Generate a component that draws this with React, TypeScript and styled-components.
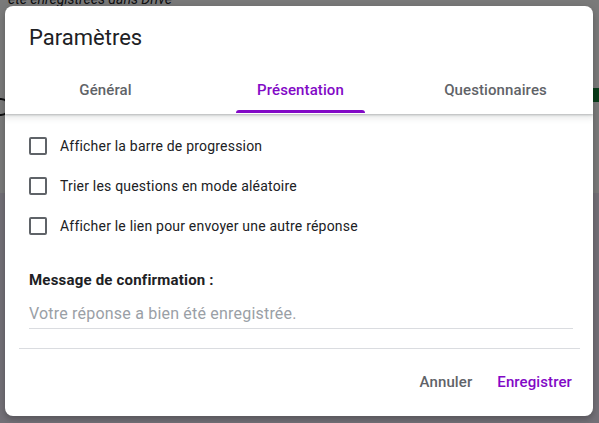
import React from "react";
import styled, { createGlobalStyle } from "styled-components";

const Global = createGlobalStyle`
  html, body { margin: 0; padding: 0; }
  body {
    width: 599px;
    height: 423px;
    overflow: hidden;
    font-family: Roboto, "Liberation Sans", Arial, sans-serif;
    background: #f0ebf8;
  }
`;

const Stage = styled.div`
  position: relative;
  width: 599px;
  height: 423px;
  overflow: hidden;
  background: #f0ebf8;
`;

const PageCard = styled.div`
  display: flex;
  flex-direction: column;
  height: 193px;
  background: #ffffff;
  padding: 0 8px;
`;

const PageNote = styled.div`
  margin-top: -9px;
  font-size: 14px;
  font-style: italic;
  color: #202124;
  line-height: 16px;
`;

const PageRow = styled.div`
  display: flex;
  justify-content: space-between;
  align-items: flex-start;
  margin-top: 81px;
  margin-left: -16px;
  margin-right: -8px;
`;

const PageCircle = styled.div`
  margin-top: 10px;
  width: 14px;
  height: 14px;
  border: 2px solid #202124;
  border-radius: 50%;
`;

const PageChip = styled.div`
  width: 8px;
  height: 14px;
  background: #188038;
`;

const Scrim = styled.div`
  position: absolute;
  inset: 0;
  background: rgba(0, 0, 0, 0.52);
`;

const Dialog = styled.div`
  position: absolute;
  left: 5px;
  top: 6px;
  width: 588px;
  height: 410px;
  background: #ffffff;
  border-radius: 8px;
  display: flex;
  flex-direction: column;
  overflow: hidden;
  box-shadow: 0 4px 5px rgba(0, 0, 0, 0.14), 0 1px 10px rgba(0, 0, 0, 0.12);
`;

const Title = styled.h1`
  margin: 0;
  padding: 18px 24px 0;
  height: 42px;
  box-sizing: border-box;
  font-size: 22px;
  line-height: 28px;
  font-weight: 400;
  color: #202124;
`;

const TabBar = styled.div`
  position: relative;
  z-index: 1;
  display: flex;
  height: 66px;
  padding: 18px 0 0 3px;
  box-sizing: border-box;
  background: #ffffff;
  clip-path: inset(0 0 -12px 0);
  box-shadow: 0 1px 2px rgba(60, 64, 67, 0.3), 0 2px 6px 2px rgba(60, 64, 67, 0.12);
`;

const Tab = styled.div`
  flex: 1;
  display: flex;
  justify-content: center;
  height: 48px;
`;

const TabLabel = styled.span<{ $active?: boolean }>`
  position: relative;
  display: inline-flex;
  align-items: center;
  padding: 0 21px;
  height: 100%;
  font-size: 15px;
  font-weight: 500;
  letter-spacing: 0.1px;
  color: ${(p) => (p.$active ? "#8209c6" : "#5f6368")};
  &::after {
    content: "";
    display: ${(p) => (p.$active ? "block" : "none")};
    position: absolute;
    left: 0;
    right: 0;
    bottom: 1px;
    height: 3px;
    border-radius: 3px 3px 0 0;
    background: #8209c6;
  }
`;

const Body = styled.div`
  display: flex;
  flex-direction: column;
  padding: 12px 20px 0 24px;
`;

const CheckRow = styled.label`
  display: flex;
  align-items: center;
  gap: 13px;
  height: 40px;
  font-size: 14px;
  letter-spacing: 0.2px;
  color: #202124;
`;

const Box = styled.span`
  width: 18px;
  height: 18px;
  box-sizing: border-box;
  border: 2px solid #5f6368;
  border-radius: 2px;
  flex: none;
`;

const FieldLabel = styled.div`
  margin-top: 24px;
  font-size: 15px;
  line-height: 20px;
  font-weight: 700;
  letter-spacing: 0.2px;
  color: #202124;
`;

const Field = styled.div`
  margin-top: 12px;
  padding-bottom: 2px;
  border-bottom: 1px solid #dadce0;
  font-size: 16px;
  line-height: 24px;
  letter-spacing: 0.2px;
  color: #9aa0a6;
`;

const Divider = styled.hr`
  margin: 19px 13px 0 14px;
  border: 0;
  border-top: 1px solid #dadce0;
`;

const Footer = styled.div`
  display: flex;
  justify-content: flex-end;
  gap: 9px;
  padding: 15px 13px 0 0;
`;

const Button = styled.button<{ $primary?: boolean }>`
  height: 36px;
  padding: 0 8px;
  border: 0;
  background: transparent;
  font-family: inherit;
  font-size: 15px;
  font-weight: 500;
  letter-spacing: 0.1px;
  color: ${(p) => (p.$primary ? "#8209c6" : "#5f6368")};
`;

const options = [
  "Afficher la barre de progression",
  "Trier les questions en mode aléatoire",
  "Afficher le lien pour envoyer une autre réponse",
];

export default function App() {
  return (
    <Stage>
      <Global />
      <PageCard>
        <PageNote>été enregistrées dans Drive</PageNote>
        <PageRow>
          <PageCircle />
          <PageChip />
        </PageRow>
      </PageCard>
      <Scrim />
      <Dialog>
        <Title>Paramètres</Title>
        <TabBar>
          <Tab><TabLabel>Général</TabLabel></Tab>
          <Tab><TabLabel $active>Présentation</TabLabel></Tab>
          <Tab><TabLabel>Questionnaires</TabLabel></Tab>
        </TabBar>
        <Body>
          {options.map((o) => (
            <CheckRow key={o}>
              <Box />
              {o}
            </CheckRow>
          ))}
          <FieldLabel>Message de confirmation :</FieldLabel>
          <Field>Votre réponse a bien été enregistrée.</Field>
        </Body>
        <Divider />
        <Footer>
          <Button>Annuler</Button>
          <Button $primary>Enregistrer</Button>
        </Footer>
      </Dialog>
    </Stage>
  );
}
